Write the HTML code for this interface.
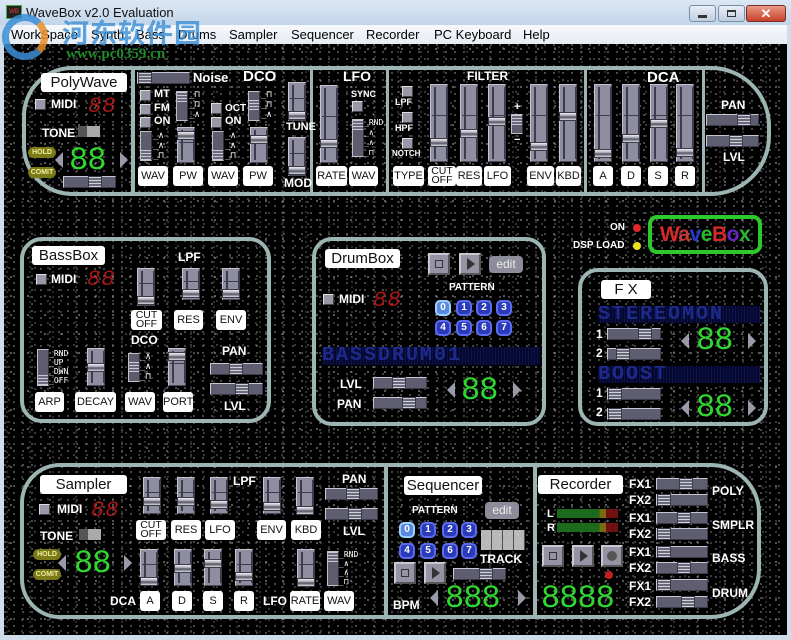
<!DOCTYPE html>
<html><head><meta charset="utf-8">
<style>
*{margin:0;padding:0;box-sizing:border-box}
body{width:791px;height:640px;overflow:hidden;background:#cfdcea;font-family:"Liberation Sans",sans-serif;position:relative}
.a{position:absolute}
#title{left:0;top:0;width:791px;height:25px;background:linear-gradient(#dbe7f4,#c3d5ea)}
#menu{left:4px;top:25px;width:783px;height:19px;background:linear-gradient(#f7f9fc,#e6ecf4);font-size:13px;color:#000}
#menu span{position:absolute;top:2px}
#main{left:4px;top:44px;width:783px;height:591px;background-color:#000;
background-image:
radial-gradient(circle at 1px 1px,#8a8a8a 0.6px,transparent 1px),
radial-gradient(circle at 2px 2px,#6a6a6a 0.6px,transparent 1px),
radial-gradient(circle at 1px 1px,#aaa 0.6px,transparent 1px),
radial-gradient(circle at 1px 1px,#555 0.6px,transparent 1px);
background-size:9px 7px,13px 11px,17px 19px,23px 5px;background-position:0 0,3px 2px,6px 4px,2px 7px}
.pn{position:absolute;border:4px solid #9cb4b2}
.dv{position:absolute;width:4px;background:#9cb4b2}
.lb{position:absolute;background:#fff;border-radius:3px;color:#111;font-size:15px;text-align:center;line-height:19px;height:19px}
.t{position:absolute;color:#fff;font-weight:bold;font-size:11px;white-space:nowrap}
.T{position:absolute;color:#fff;font-weight:bold;font-size:15px;white-space:nowrap}
.b{position:absolute;background:#fff;border-radius:3px;color:#111;font-size:11px;text-align:center;height:20px;line-height:20px}
.b2{line-height:9px;padding-top:1px;font-size:10.5px}
.vs{position:absolute;width:18px;background:#8e8ea0;border:1px solid #c4c4d0;border-right-color:#4a4a58;border-bottom-color:#4a4a58}
.vs:before{content:"";position:absolute;left:3px;top:2px;bottom:2px;width:10px;border-left:2px solid #3c3c4c;border-right:2px solid #3c3c4c}
.vs:after{content:"";position:absolute;left:1px;right:1px;top:40%;height:1px;background:#3c3c4c}
.vs i{position:absolute;left:-1px;width:18px;height:9px;background:linear-gradient(#f0f0f4,#9a9aa8 45%,#4a4a58 55%,#d8d8e0);border:1px solid #3a3a48;z-index:2}
.sw{position:absolute;width:12px;background:#5c5c6c;border:1px solid #c0c0cc;border-right-color:#333}
.sw i{position:absolute;left:0;width:10px;height:10px;background:repeating-linear-gradient(#c8c8d4 0 1px,#6a6a7a 1px 3px);}
.hs{position:absolute;height:12px;background:#5e5e70;border:1px solid #c8c8d4;border-right-color:#3a3a48;border-bottom-color:#3a3a48}
.hs i{position:absolute;top:-1px;width:14px;height:12px;background:repeating-linear-gradient(#d0d0d8 0 1px,#6a6a7a 1px 3px);border:1px solid #3a3a48}
.cb{position:absolute;width:11px;height:11px;background:#9898a8;border:1px solid #ddd;border-right-color:#444;border-bottom-color:#444}
.red{position:absolute;color:#c81818;font-family:"Liberation Mono",monospace;font-style:italic;font-size:22px;letter-spacing:1px;opacity:.85}
.grn{position:absolute;color:#2fd82f;font-family:"Liberation Mono",monospace;font-size:32px;letter-spacing:-1px;line-height:30px}
.ar{position:absolute;width:0;height:0;border-top:8px solid transparent;border-bottom:8px solid transparent}
.al{border-right:8px solid #9a9aa8}.arr{border-left:8px solid #9a9aa8}
.ov{position:absolute;width:28px;height:11px;border-radius:6px;background:#7a7a18;color:#f0f0a0;font-size:7px;font-weight:bold;text-align:center;line-height:11px}
.pb{position:absolute;width:22px;height:22px;background:#9494a4;border:2px solid #c8c8d4;border-right-color:#555;border-bottom-color:#555}
.ed{position:absolute;width:34px;height:17px;background:#8c8c9a;border-radius:4px;color:#eee;font-size:12px;text-align:center;line-height:16px}
.pt{position:absolute;width:16px;height:16px;border-radius:5px;background:#2a3ab8;border:2px solid #5c6cf0;color:#fff;font-size:10px;font-weight:bold;text-align:center;line-height:12px}
.mx{position:absolute;color:#1e2a8a;font-family:"Liberation Mono",monospace;font-weight:bold;font-size:20px;letter-spacing:2px;background:repeating-linear-gradient(90deg,#05082a 0 2px,#0c1250 2px 3px);line-height:18px;overflow:hidden}
.wv{position:absolute;color:#fff;font-size:9px;line-height:10px;white-space:pre;font-family:"DejaVu Sans Mono",monospace}
</style></head><body>
<div id="title" class="a">
 <div class="a" style="left:6px;top:5px;width:16px;height:14px;background:#222;border:1px solid #4a4;font-size:6px;color:#e33;text-align:center;line-height:12px">WB</div>
 <div class="a" style="left:26px;top:5px;font-size:13px;color:#111">WaveBox v2.0 Evaluation</div>
 <div class="a" style="left:689px;top:5px;width:27px;height:17px;border:1px solid #7a8ea8;border-radius:3px;background:linear-gradient(#e8eef6,#c0cee0)"><div class="a" style="left:8px;top:9px;width:9px;height:3px;background:#333"></div></div>
 <div class="a" style="left:718px;top:5px;width:27px;height:17px;border:1px solid #7a8ea8;border-radius:3px;background:linear-gradient(#e8eef6,#c0cee0)"><div class="a" style="left:8px;top:4px;width:9px;height:7px;border:1px solid #333;border-top-width:2px"></div></div>
 <div class="a" style="left:746px;top:5px;width:40px;height:17px;border:1px solid #7a3020;border-radius:3px;background:linear-gradient(#e89a86,#c8402a);color:#fff;font-weight:bold;font-size:13px;text-align:center;line-height:15px">✕</div>
</div>
<div id="menu" class="a">
 <span style="left:7px">WorkSpace</span><span style="left:87px">Synth</span><span style="left:132px">Bass</span><span style="left:174px">Drums</span><span style="left:225px">Sampler</span><span style="left:287px">Sequencer</span><span style="left:362px">Recorder</span><span style="left:430px">PC Keyboard</span><span style="left:519px">Help</span>
</div>
<div id="main" class="a"></div>
<div class="a" style="left:2px;top:14px;width:46px;height:46px;border-radius:50%;border:7px solid #3b8fd6;border-right-color:#e8902a;opacity:.85"></div>
<div class="a" style="left:62px;top:12px;font-family:'Noto Sans CJK SC',sans-serif;font-weight:bold;font-size:27px;color:#3b8fd6;opacity:.8;letter-spacing:1px">河东软件园</div>
<div class="a" style="left:66px;top:46px;font-family:'Liberation Serif',serif;font-weight:bold;font-size:15px;color:#1f8a2a">www.pc0359.cn</div>

<!-- TOP PANEL -->
<div class="pn" style="left:22px;top:66px;width:749px;height:130px;border-radius:50px 60px 60px 50px"></div>
<div class="dv" style="left:131px;top:68px;height:126px"></div>
<div class="dv" style="left:310px;top:68px;height:126px;width:3px"></div>
<div class="dv" style="left:386px;top:68px;height:126px;width:3px"></div>
<div class="dv" style="left:584px;top:68px;height:126px;width:3px"></div>
<div class="dv" style="left:702px;top:68px;height:126px;width:3px"></div>

<div class="lb" style="left:41px;top:73px;width:86px">PolyWave</div>
<div class="cb" style="left:35px;top:99px"></div><div class="t" style="left:51px;top:97px;font-size:12px">MIDI</div>
<div class="red" style="left:88px;top:94px">88</div>
<div class="t" style="left:42px;top:126px;font-size:12px">TONE</div>
<div class="a" style="left:78px;top:126px;width:22px;height:11px;background:#aaa;border-left:9px solid #555"></div>
<div class="ov" style="left:28px;top:147px">HOLD</div><div class="ov" style="left:28px;top:167px">COMIT</div>
<div class="ar al" style="left:55px;top:152px"></div><div class="grn" style="left:69px;top:146px">88</div><div class="ar arr" style="left:120px;top:152px"></div>
<div class="hs" style="left:63px;top:176px;width:53px"><i style="left:24px"></i></div>

<div class="hs" style="left:137px;top:72px;width:53px"><i style="left:0px"></i></div>
<div class="T" style="left:193px;top:70px;font-size:13px">Noise</div>
<div class="T" style="left:243px;top:68px;font-size:15px">DCO</div>
<div class="cb" style="left:140px;top:90px"></div><div class="t" style="left:154px;top:88px">MT</div>
<div class="cb" style="left:140px;top:104px"></div><div class="t" style="left:154px;top:102px">FM</div>
<div class="cb" style="left:140px;top:117px"></div><div class="t" style="left:154px;top:115px">ON</div>
<div class="sw" style="left:176px;top:91px;height:30px"><i style="top:0"></i></div>
<div class="wv" style="left:189px;top:90px">_⊓
_⊓
_∧</div>
<div class="sw" style="left:140px;top:131px;height:30px"><i style="top:18px"></i></div>
<div class="wv" style="left:153px;top:131px">_∧
_∧
_⊓</div>
<div class="vs" style="left:177px;top:127px;height:36px"><i style="top:3px"></i></div>
<div class="cb" style="left:211px;top:103px"></div><div class="t" style="left:225px;top:103px;font-size:10px">OCT</div>
<div class="cb" style="left:211px;top:117px"></div><div class="t" style="left:225px;top:115px">ON</div>
<div class="sw" style="left:212px;top:131px;height:30px"><i style="top:18px"></i></div>
<div class="wv" style="left:225px;top:131px">_∧
_∧
_⊓</div>
<div class="sw" style="left:248px;top:91px;height:30px"><i style="top:8px"></i></div>
<div class="wv" style="left:261px;top:90px">_⊓
_⊓
_∧</div>
<div class="vs" style="left:250px;top:127px;height:36px"><i style="top:7px"></i></div>
<div class="vs" style="left:288px;top:82px;height:39px"><i style="top:28px"></i></div>
<div class="t" style="left:286px;top:121px">TUNE</div>
<div class="vs" style="left:288px;top:137px;height:39px"><i style="top:28px"></i></div>
<div class="t" style="left:284px;top:176px;font-size:12px">MOD</div>
<div class="b" style="left:138px;top:166px;width:30px">WAV</div>
<div class="b" style="left:173px;top:166px;width:30px">PW</div>
<div class="b" style="left:208px;top:166px;width:30px">WAV</div>
<div class="b" style="left:243px;top:166px;width:30px">PW</div>

<div class="T" style="left:343px;top:68px;font-size:14px">LFO</div>
<div class="vs" style="left:320px;top:85px;height:78px"><i style="top:53px"></i></div>
<div class="t" style="left:351px;top:89px;font-size:9px">SYNC</div>
<div class="cb" style="left:352px;top:101px"></div>
<div class="sw" style="left:352px;top:119px;height:38px"><i style="top:0"></i></div>
<div class="wv" style="left:364px;top:118px;font-size:8px">_RND
_∧
_∧
_⊓</div>
<div class="b" style="left:316px;top:166px;width:31px">RATE</div>
<div class="b" style="left:349px;top:166px;width:29px">WAV</div>

<div class="t" style="left:467px;top:69px;font-size:12px">FILTER</div>
<div class="cb" style="left:402px;top:86px"></div><div class="t" style="left:395px;top:97px;font-size:9px">LPF</div>
<div class="cb" style="left:402px;top:112px"></div><div class="t" style="left:395px;top:123px;font-size:9px">HPF</div>
<div class="cb" style="left:402px;top:138px"></div><div class="t" style="left:392px;top:149px;font-size:8px">NOTCH</div>
<div class="vs" style="left:430px;top:84px;height:78px"><i style="top:53px"></i></div>
<div class="vs" style="left:460px;top:84px;height:78px"><i style="top:44px"></i></div>
<div class="vs" style="left:488px;top:84px;height:78px"><i style="top:32px"></i></div>
<div class="t" style="left:514px;top:101px">+</div><div class="t" style="left:514px;top:134px">−</div>
<div class="sw" style="left:511px;top:114px;height:20px"><i style="top:0"></i></div>
<div class="vs" style="left:530px;top:84px;height:78px"><i style="top:57px"></i></div>
<div class="vs" style="left:559px;top:84px;height:78px"><i style="top:27px"></i></div>
<div class="b" style="left:393px;top:166px;width:31px">TYPE</div>
<div class="b b2" style="left:428px;top:166px;width:28px">CUT<br>OFF</div>
<div class="b" style="left:456px;top:166px;width:26px">RES</div>
<div class="b" style="left:484px;top:166px;width:27px">LFO</div>
<div class="b" style="left:527px;top:166px;width:27px">ENV</div>
<div class="b" style="left:556px;top:166px;width:25px">KBD</div>

<div class="T" style="left:647px;top:69px;font-size:15px">DCA</div>
<div class="vs" style="left:594px;top:84px;height:78px"><i style="top:64px"></i></div>
<div class="vs" style="left:622px;top:84px;height:78px"><i style="top:49px"></i></div>
<div class="vs" style="left:650px;top:84px;height:78px"><i style="top:34px"></i></div>
<div class="vs" style="left:676px;top:84px;height:78px"><i style="top:63px"></i></div>
<div class="b" style="left:593px;top:166px;width:20px">A</div>
<div class="b" style="left:621px;top:166px;width:20px">D</div>
<div class="b" style="left:648px;top:166px;width:20px">S</div>
<div class="b" style="left:675px;top:166px;width:20px">R</div>

<div class="t" style="left:721px;top:98px;font-size:12px">PAN</div>
<div class="hs" style="left:706px;top:114px;width:53px"><i style="left:30px"></i></div>
<div class="hs" style="left:706px;top:135px;width:53px"><i style="left:22px"></i></div>
<div class="t" style="left:723px;top:150px;font-size:12px">LVL</div>

<div class="t" style="left:610px;top:222px;font-size:10px">ON</div>
<div class="a" style="left:633px;top:224px;width:8px;height:8px;border-radius:50%;background:#e02828"></div>
<div class="t" style="left:573px;top:240px;font-size:10px">DSP LOAD</div>
<div class="a" style="left:633px;top:242px;width:8px;height:8px;border-radius:50%;background:#e8e020"></div>
<div class="a" style="left:648px;top:215px;width:114px;height:39px;border:4px solid #2cc82c;border-radius:9px;text-align:center;font-size:21px;line-height:31px;font-weight:bold;letter-spacing:-0.5px"><span style="color:#d82828">W</span><span style="color:#c83838">a</span><span style="color:#2838d0">v</span><span style="color:#2cb82c">e</span><span style="color:#d82828">B</span><span style="color:#6028c0">o</span><span style="color:#2cb82c">x</span></div>

<!-- BASSBOX -->
<div class="pn" style="left:20px;top:237px;width:251px;height:186px;border-radius:22px"></div>
<div class="lb" style="left:32px;top:246px;width:73px">BassBox</div>
<div class="cb" style="left:36px;top:274px"></div><div class="t" style="left:51px;top:272px;font-size:12px">MIDI</div>
<div class="red" style="left:87px;top:267px">88</div>
<div class="t" style="left:178px;top:250px;font-size:12px">LPF</div>
<div class="vs" style="left:137px;top:268px;height:38px"><i style="top:27px"></i></div>
<div class="vs" style="left:182px;top:268px;height:32px"><i style="top:20px"></i></div>
<div class="vs" style="left:222px;top:268px;height:32px"><i style="top:20px"></i></div>
<div class="b b2" style="left:131px;top:310px;width:31px">CUT<br>OFF</div>
<div class="b" style="left:174px;top:310px;width:29px">RES</div>
<div class="b" style="left:216px;top:310px;width:30px">ENV</div>
<div class="t" style="left:131px;top:333px;font-size:12px">DCO</div>
<div class="sw" style="left:37px;top:349px;height:37px"><i style="top:25px"></i></div>
<div class="wv" style="left:49px;top:349px;font-size:8px;line-height:9px">_RND
_UP
_DWN
_OFF</div>
<div class="vs" style="left:87px;top:348px;height:38px"><i style="top:14px"></i></div>
<div class="sw" style="left:128px;top:353px;height:29px"><i style="top:8px"></i></div>
<div class="wv" style="left:140px;top:352px">_∧
_∧
_⊓</div>
<div class="vs" style="left:168px;top:348px;height:38px"><i style="top:3px"></i></div>
<div class="t" style="left:222px;top:344px;font-size:12px">PAN</div>
<div class="hs" style="left:210px;top:363px;width:53px"><i style="left:18px"></i></div>
<div class="hs" style="left:210px;top:383px;width:53px"><i style="left:24px"></i></div>
<div class="t" style="left:224px;top:399px;font-size:12px">LVL</div>
<div class="b" style="left:35px;top:392px;width:29px">ARP</div>
<div class="b" style="left:75px;top:392px;width:41px">DECAY</div>
<div class="b" style="left:125px;top:392px;width:30px">WAV</div>
<div class="b" style="left:163px;top:392px;width:30px">PORT</div>

<!-- DRUMBOX -->
<div class="pn" style="left:312px;top:237px;width:234px;height:189px;border-radius:20px"></div>
<div class="lb" style="left:325px;top:249px;width:75px">DrumBox</div>
<div class="pb" style="left:428px;top:253px"><div class="a" style="left:5px;top:5px;width:8px;height:8px;border:1px solid #333"></div></div>
<div class="pb" style="left:459px;top:253px"><div class="a" style="left:6px;top:3px;border-left:8px solid #333;border-top:6px solid transparent;border-bottom:6px solid transparent"></div></div>
<div class="ed" style="left:489px;top:256px">edit</div>
<div class="t" style="left:449px;top:282px;font-size:10px">PATTERN</div>
<div class="pt" style="left:435px;top:300px;background:#5a8ae0;border-color:#9cd0ff">0</div><div class="pt" style="left:456px;top:300px">1</div><div class="pt" style="left:476px;top:300px">2</div><div class="pt" style="left:496px;top:300px">3</div>
<div class="pt" style="left:435px;top:320px">4</div><div class="pt" style="left:456px;top:320px">5</div><div class="pt" style="left:476px;top:320px">6</div><div class="pt" style="left:496px;top:320px">7</div>
<div class="cb" style="left:323px;top:294px"></div><div class="t" style="left:339px;top:292px;font-size:12px">MIDI</div>
<div class="red" style="left:373px;top:288px">88</div>
<div class="mx" style="left:322px;top:347px;width:218px;height:18px">BASSDRUM01</div>
<div class="t" style="left:340px;top:377px;font-size:12px">LVL</div>
<div class="hs" style="left:373px;top:377px;width:54px"><i style="left:18px"></i></div>
<div class="t" style="left:337px;top:397px;font-size:12px">PAN</div>
<div class="hs" style="left:373px;top:397px;width:54px"><i style="left:28px"></i></div>
<div class="ar al" style="left:447px;top:382px"></div><div class="grn" style="left:461px;top:376px">88</div><div class="ar arr" style="left:513px;top:382px"></div>

<!-- FX -->
<div class="pn" style="left:578px;top:268px;width:190px;height:158px;border-radius:20px"></div>
<div class="lb" style="left:601px;top:280px;width:50px">F X</div>
<div class="mx" style="left:598px;top:306px;width:162px;height:17px">STEREOMON</div>
<div class="t" style="left:596px;top:327px;font-size:12px">1</div><div class="hs" style="left:607px;top:328px;width:54px"><i style="left:30px"></i></div>
<div class="t" style="left:596px;top:346px;font-size:12px">2</div><div class="hs" style="left:607px;top:348px;width:54px"><i style="left:8px"></i></div>
<div class="ar al" style="left:681px;top:333px"></div><div class="grn" style="left:696px;top:326px">88</div><div class="ar arr" style="left:748px;top:333px"></div>
<div class="mx" style="left:598px;top:366px;width:162px;height:17px">BOOST</div>
<div class="t" style="left:596px;top:386px;font-size:12px">1</div><div class="hs" style="left:607px;top:388px;width:54px"><i style="left:0px"></i></div>
<div class="t" style="left:596px;top:405px;font-size:12px">2</div><div class="hs" style="left:607px;top:408px;width:54px"><i style="left:0px"></i></div>
<div class="ar al" style="left:681px;top:400px"></div><div class="grn" style="left:696px;top:393px">88</div><div class="ar arr" style="left:748px;top:400px"></div>

<!-- BOTTOM PANEL -->
<div class="pn" style="left:20px;top:463px;width:741px;height:156px;border-radius:40px 50px 50px 40px"></div>
<div class="dv" style="left:384px;top:465px;height:152px"></div>
<div class="dv" style="left:533px;top:465px;height:152px"></div>
<div class="lb" style="left:40px;top:475px;width:87px">Sampler</div>
<div class="cb" style="left:39px;top:504px"></div><div class="t" style="left:57px;top:502px;font-size:12px">MIDI</div>
<div class="red" style="left:91px;top:498px">88</div>
<div class="t" style="left:40px;top:529px;font-size:12px">TONE</div>
<div class="a" style="left:79px;top:529px;width:22px;height:11px;background:#aaa;border-left:9px solid #555"></div>
<div class="ov" style="left:33px;top:549px">HOLD</div><div class="ov" style="left:33px;top:569px">COMIT</div>
<div class="ar al" style="left:58px;top:555px"></div><div class="grn" style="left:74px;top:549px">88</div><div class="ar arr" style="left:124px;top:555px"></div>
<div class="vs" style="left:143px;top:477px;height:37px"><i style="top:19px"></i></div>
<div class="vs" style="left:177px;top:477px;height:37px"><i style="top:19px"></i></div>
<div class="vs" style="left:210px;top:477px;height:37px"><i style="top:22px"></i></div>
<div class="t" style="left:233px;top:474px;font-size:12px">LPF</div>
<div class="vs" style="left:263px;top:477px;height:37px"><i style="top:24px"></i></div>
<div class="vs" style="left:296px;top:477px;height:37px"><i style="top:28px"></i></div>
<div class="b b2" style="left:136px;top:520px;width:30px">CUT<br>OFF</div>
<div class="b" style="left:171px;top:520px;width:30px">RES</div>
<div class="b" style="left:205px;top:520px;width:30px">LFO</div>
<div class="b" style="left:257px;top:520px;width:29px">ENV</div>
<div class="b" style="left:291px;top:520px;width:30px">KBD</div>
<div class="t" style="left:342px;top:472px;font-size:12px">PAN</div>
<div class="hs" style="left:325px;top:488px;width:53px"><i style="left:20px"></i></div>
<div class="hs" style="left:325px;top:508px;width:53px"><i style="left:22px"></i></div>
<div class="t" style="left:343px;top:524px;font-size:12px">LVL</div>
<div class="vs" style="left:140px;top:549px;height:37px"><i style="top:27px"></i></div>
<div class="vs" style="left:174px;top:549px;height:37px"><i style="top:14px"></i></div>
<div class="vs" style="left:204px;top:549px;height:37px"><i style="top:9px"></i></div>
<div class="vs" style="left:235px;top:549px;height:37px"><i style="top:22px"></i></div>
<div class="vs" style="left:297px;top:549px;height:37px"><i style="top:28px"></i></div>
<div class="sw" style="left:327px;top:551px;height:35px"><i style="top:0"></i></div>
<div class="wv" style="left:339px;top:550px;font-size:8px;line-height:9px">_RND
_∧
_∧
_⊓</div>
<div class="t" style="left:110px;top:594px;font-size:12px">DCA</div>
<div class="b" style="left:140px;top:591px;width:20px">A</div>
<div class="b" style="left:172px;top:591px;width:20px">D</div>
<div class="b" style="left:203px;top:591px;width:20px">S</div>
<div class="b" style="left:234px;top:591px;width:20px">R</div>
<div class="t" style="left:263px;top:594px;font-size:12px">LFO</div>
<div class="b" style="left:290px;top:591px;width:30px">RATE</div>
<div class="b" style="left:324px;top:591px;width:30px">WAV</div>

<div class="lb" style="left:404px;top:476px;width:78px">Sequencer</div>
<div class="t" style="left:412px;top:505px;font-size:10px">PATTERN</div>
<div class="ed" style="left:485px;top:502px">edit</div>
<div class="pt" style="left:399px;top:522px;background:#5a8ae0;border-color:#9cd0ff">0</div><div class="pt" style="left:420px;top:522px">1</div><div class="pt" style="left:442px;top:522px">2</div><div class="pt" style="left:461px;top:522px">3</div>
<div class="pt" style="left:399px;top:543px">4</div><div class="pt" style="left:420px;top:543px">5</div><div class="pt" style="left:442px;top:543px">6</div><div class="pt" style="left:461px;top:543px">7</div>
<div class="a" style="left:481px;top:530px;width:44px;height:20px;background:repeating-linear-gradient(90deg,#ccc 0 10px,#555 10px 11px),#ccc;opacity:.9"></div>
<div class="t" style="left:480px;top:552px;font-size:12px">TRACK</div>
<div class="pb" style="left:394px;top:562px"><div class="a" style="left:5px;top:5px;width:8px;height:8px;border:1px solid #333"></div></div>
<div class="pb" style="left:424px;top:562px"><div class="a" style="left:6px;top:3px;border-left:8px solid #333;border-top:6px solid transparent;border-bottom:6px solid transparent"></div></div>
<div class="hs" style="left:453px;top:568px;width:53px"><i style="left:25px"></i></div>
<div class="t" style="left:393px;top:598px;font-size:12px">BPM</div>
<div class="ar al" style="left:430px;top:590px"></div><div class="grn" style="left:445px;top:584px">888</div><div class="ar arr" style="left:518px;top:590px"></div>

<div class="lb" style="left:538px;top:475px;width:85px">Recorder</div>
<div class="t" style="left:547px;top:508px;font-size:11px">L</div>
<div class="a" style="left:557px;top:509px;width:61px;height:9px;background:linear-gradient(90deg,#1c6a1c 0 70%,#7a6a10 70% 80%,#701010 80%)"></div>
<div class="t" style="left:547px;top:522px;font-size:11px">R</div>
<div class="a" style="left:557px;top:523px;width:61px;height:9px;background:linear-gradient(90deg,#1c6a1c 0 70%,#7a6a10 70% 80%,#701010 80%)"></div>
<div class="pb" style="left:542px;top:545px"><div class="a" style="left:5px;top:5px;width:8px;height:8px;border:1px solid #333"></div></div>
<div class="pb" style="left:572px;top:545px"><div class="a" style="left:6px;top:3px;border-left:8px solid #333;border-top:6px solid transparent;border-bottom:6px solid transparent"></div></div>
<div class="pb" style="left:601px;top:545px"><div class="a" style="left:4px;top:4px;width:10px;height:10px;border-radius:50%;background:#555"></div></div>
<div class="a" style="left:605px;top:571px;width:8px;height:8px;border-radius:50%;background:#c02020"></div>
<div class="grn" style="left:541px;top:584px">8888</div>
<div class="t" style="left:629px;top:477px;font-size:12px">FX1</div><div class="hs" style="left:656px;top:478px;width:52px"><i style="left:22px"></i></div>
<div class="t" style="left:629px;top:493px;font-size:12px">FX2</div><div class="hs" style="left:656px;top:494px;width:52px"><i style="left:0px"></i></div>
<div class="t" style="left:629px;top:511px;font-size:12px">FX1</div><div class="hs" style="left:656px;top:512px;width:52px"><i style="left:20px"></i></div>
<div class="t" style="left:629px;top:527px;font-size:12px">FX2</div><div class="hs" style="left:656px;top:528px;width:52px"><i style="left:0px"></i></div>
<div class="t" style="left:629px;top:545px;font-size:12px">FX1</div><div class="hs" style="left:656px;top:546px;width:52px"><i style="left:0px"></i></div>
<div class="t" style="left:629px;top:561px;font-size:12px">FX2</div><div class="hs" style="left:656px;top:562px;width:52px"><i style="left:20px"></i></div>
<div class="t" style="left:629px;top:579px;font-size:12px">FX1</div><div class="hs" style="left:656px;top:579px;width:52px"><i style="left:0px"></i></div>
<div class="t" style="left:629px;top:595px;font-size:12px">FX2</div><div class="hs" style="left:656px;top:596px;width:52px"><i style="left:24px"></i></div>
<div class="t" style="left:712px;top:484px;font-size:12px">POLY</div>
<div class="t" style="left:712px;top:518px;font-size:12px">SMPLR</div>
<div class="t" style="left:712px;top:551px;font-size:12px">BASS</div>
<div class="t" style="left:712px;top:586px;font-size:12px">DRUM</div>
</body></html>
